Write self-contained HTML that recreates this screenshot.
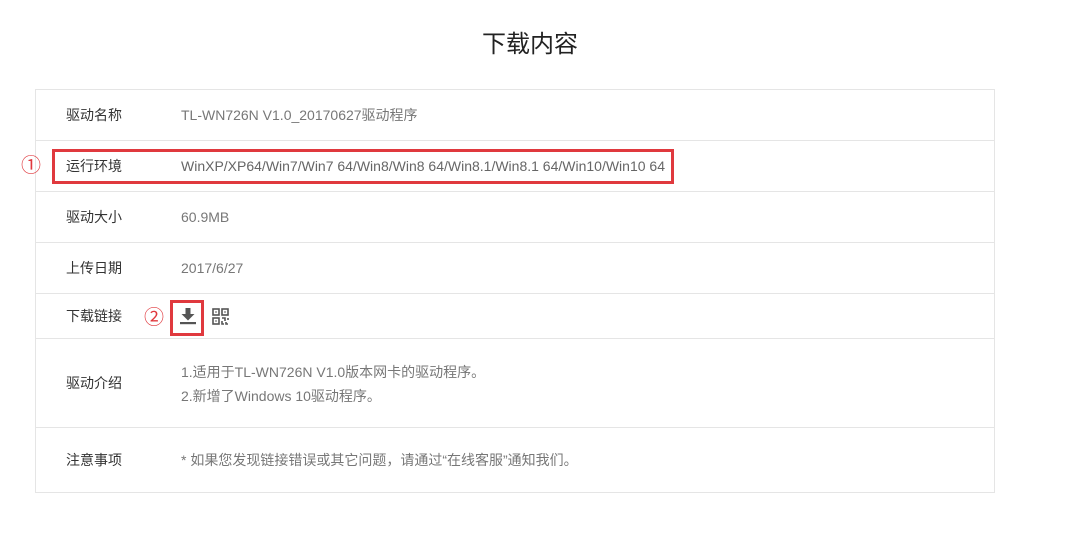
<!DOCTYPE html>
<html><head><meta charset="utf-8">
<style>
*{margin:0;padding:0;box-sizing:border-box}
body{width:1068px;height:550px;background:#fff;position:relative;font-family:"Liberation Sans","Noto Sans CJK SC",sans-serif;overflow:hidden}
.title{position:absolute;left:-4px;width:1068px;top:24px;text-align:center;font-size:24px;color:#222}
.tbl{position:absolute;left:35px;top:89px;width:960px;height:404px;border:1px solid #e5e5e5}
.row{position:absolute;left:0;width:958px;border-bottom:1px solid #e5e5e5}
.lab{position:absolute;left:30px;top:0;font-size:14px;color:#333}
.val{position:absolute;left:145px;top:0;font-size:14px;color:#777}
.red{position:absolute;border:3px solid #e0393e}
.num{position:absolute;color:#e0393e;font-size:20px;line-height:20px}
</style></head><body>
<div class="title">下载内容</div>
<div class="tbl">
 <div class="row" style="top:0;height:51px;line-height:50px"><span class="lab">驱动名称</span><span class="val">TL-WN726N V1.0_20170627驱动程序</span></div>
 <div class="row" style="top:51px;height:51px;line-height:50px"><span class="lab">运行环境</span><span class="val" style="color:#666">WinXP/XP64/Win7/Win7 64/Win8/Win8 64/Win8.1/Win8.1 64/Win10/Win10 64</span></div>
 <div class="row" style="top:102px;height:51px;line-height:50px"><span class="lab">驱动大小</span><span class="val">60.9MB</span></div>
 <div class="row" style="top:153px;height:51px;line-height:50px"><span class="lab">上传日期</span><span class="val">2017/6/27</span></div>
 <div class="row" style="top:204px;height:45px;line-height:44px"><span class="lab">下载链接</span></div>
 <div class="row" style="top:249px;height:89px;line-height:88px"><span class="lab">驱动介绍</span><span class="val" style="top:21px;line-height:24px">1.适用于TL-WN726N V1.0版本网卡的驱动程序。<br>2.新增了Windows 10驱动程序。</span></div>
 <div class="row" style="top:338px;height:65px;line-height:64px;border-bottom:none"><span class="lab">注意事项</span><span class="val">* 如果您发现链接错误或其它问题，请通过“在线客服”通知我们。</span></div>
</div>
<div class="red" style="left:52px;top:149px;width:622px;height:35px"></div>
<div class="num" style="left:21px;top:156px">①</div>
<div class="red" style="left:170px;top:300px;width:34px;height:36px"></div>
<div class="num" style="left:144px;top:308px">②</div>
<svg style="position:absolute;left:178px;top:306px" width="20" height="20" viewBox="0 0 20 20">
<rect x="7.5" y="2" width="5" height="7" fill="#555"/><polygon points="3.5,8 16.5,8 10,14.5" fill="#555"/><rect x="2" y="16" width="16" height="2.2" fill="#555"/></svg>
<svg style="position:absolute;left:212px;top:308px" width="17" height="17" viewBox="0 0 17 17" fill="none" stroke="#555" stroke-width="1.6">
<rect x="1" y="1" width="6" height="6"/><rect x="10" y="1" width="6" height="6"/><rect x="1" y="10" width="6" height="6"/>
<rect x="3.3" y="3.3" width="1.4" height="1.4" fill="#555" stroke="none"/><rect x="12.3" y="3.3" width="1.4" height="1.4" fill="#555" stroke="none"/><rect x="3.3" y="12.3" width="1.4" height="1.4" fill="#555" stroke="none"/>
<path d="M10 10h3v3M16 10v2M10 13v3h2M14 14v2h2"/></svg>
</body></html>
